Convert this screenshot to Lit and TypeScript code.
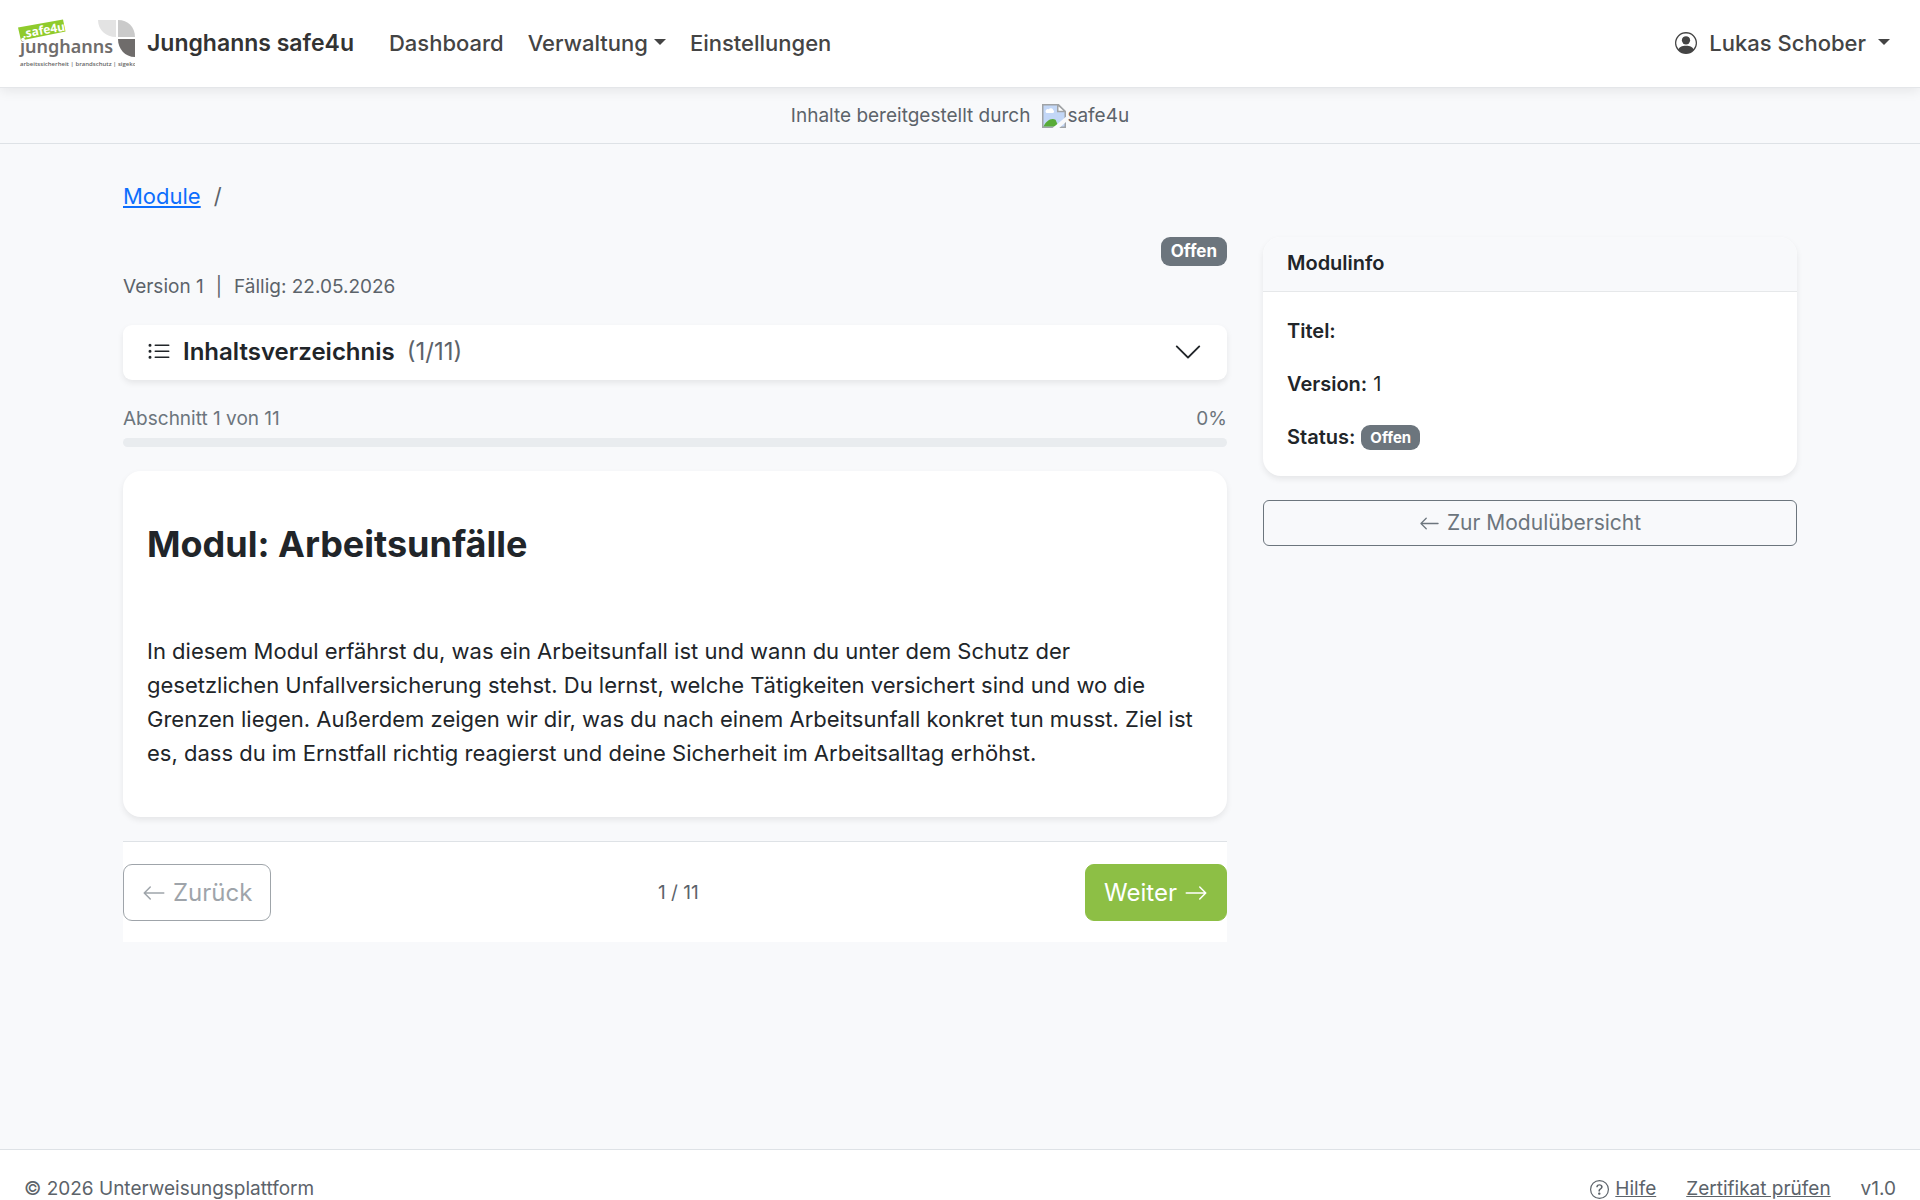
import { LitElement, html, css, svg } from "lit";
import { customElement, property, state } from "lit/decorators.js";

const ICON_PATHS = {
  list: svg`<path fill-rule="evenodd" d="M5 11.5a.5.5 0 0 1 .5-.5h9a.5.5 0 0 1 0 1h-9a.5.5 0 0 1-.5-.5m0-4a.5.5 0 0 1 .5-.5h9a.5.5 0 0 1 0 1h-9a.5.5 0 0 1-.5-.5m0-4a.5.5 0 0 1 .5-.5h9a.5.5 0 0 1 0 1h-9a.5.5 0 0 1-.5-.5m-3 1a1 1 0 1 0 0-2 1 1 0 0 0 0 2m0 4a1 1 0 1 0 0-2 1 1 0 0 0 0 2m0 4a1 1 0 1 0 0-2 1 1 0 0 0 0 2"/>`,
  person: svg`<path d="M11 6a3 3 0 1 1-6 0 3 3 0 0 1 6 0"/><path fill-rule="evenodd" d="M0 8a8 8 0 1 1 16 0A8 8 0 0 1 0 8m8-7a7 7 0 0 0-5.468 11.37C3.242 11.226 4.805 10 8 10s4.757 1.225 5.468 2.37A7 7 0 0 0 8 1"/>`,
  left: svg`<path fill-rule="evenodd" d="M15 8a.5.5 0 0 0-.5-.5H2.707l3.147-3.146a.5.5 0 1 0-.708-.708l-4 4a.5.5 0 0 0 0 .708l4 4a.5.5 0 0 0 .708-.708L2.707 8.5H14.5A.5.5 0 0 0 15 8"/>`,
  right: svg`<path fill-rule="evenodd" d="M1 8a.5.5 0 0 1 .5-.5h11.793l-3.147-3.146a.5.5 0 0 1 .708-.708l4 4a.5.5 0 0 1 0 .708l-4 4a.5.5 0 0 1-.708-.708L13.293 8.5H1.5A.5.5 0 0 1 1 8"/>`,
  chevron: svg`<path fill-rule="evenodd" d="M1.646 4.646a.5.5 0 0 1 .708 0L8 10.293l5.646-5.647a.5.5 0 0 1 .708.708l-6 6a.5.5 0 0 1-.708 0l-6-6a.5.5 0 0 1 0-.708"/>`,
  help: svg`<path d="M8 15A7 7 0 1 1 8 1a7 7 0 0 1 0 14m0 1A8 8 0 1 0 8 0a8 8 0 0 0 0 16"/><path d="M5.255 5.786a.237.237 0 0 0 .241.247h.825c.138 0 .248-.113.266-.25.09-.656.54-1.134 1.342-1.134.686 0 1.314.343 1.314 1.168 0 .635-.374.927-.965 1.371-.673.489-1.206 1.06-1.168 1.987l.003.217a.25.25 0 0 0 .25.246h.811a.25.25 0 0 0 .25-.25v-.105c0-.718.273-.927 1.01-1.486.609-.463 1.244-.977 1.244-2.056 0-1.511-1.276-2.241-2.673-2.241-1.267 0-2.655.59-2.75 2.286m1.557 5.763c0 .533.425.927 1.01.927.609 0 1.028-.394 1.028-.927 0-.552-.42-.94-1.029-.94-.584 0-1.009.388-1.009.94"/>`,
};

@customElement("ui-icon")
class UiIcon extends LitElement {
  static styles = css`
    :host { display: inline-flex; flex: none; width: 22px; height: 22px; }
    svg { display: block; width: 100%; height: 100%; fill: currentColor; }
  `;
  @property() name: keyof typeof ICON_PATHS = "list";
  render() {
    return html`<svg viewBox="0 0 16 16" aria-hidden="true">${ICON_PATHS[this.name]}</svg>`;
  }
}

@customElement("brand-logo")
class BrandLogo extends LitElement {
  static styles = css`
    :host { display: block; flex: none; }
    svg { display: block; }
    .tag { font: 700 12px "Open Sans", sans-serif; fill: #fff; }
    .word { font: 600 18px "Noto Sans", sans-serif; fill: #6f6c6b; }
    .sub { font: 600 6px "Open Sans", sans-serif; fill: #666; }
  `;
  render() {
    return html`
      <svg width="117" height="50" viewBox="0 0 117 50" role="img" aria-label="safe4u Junghanns">
        <text class="word" x="2" y="35">junghanns</text>
        <path d="M0 9.500 45 1.500 47.500 13.500 3 22.500Z" fill="#8fcb2c" />
        <text class="tag" transform="translate(5 20) rotate(-10)">.safe4u</text>
        <circle cx="5" cy="21.500" r="1.800" fill="#fff" />
        <path d="M80 2h18v17C88 19 80 12 80 2Z" fill="#e3e3e3" />
        <path d="M100 2c10 0 17 7 17 17h-17Z" fill="#cacaca" />
        <path d="M100 21h17v18c-10 0-17-8-17-18Z" fill="#6f6c6b" />
        <text class="sub" x="2" y="48">arbeitssicherheit | brandschutz | sigeko</text>
      </svg>
    `;
  }
}

@customElement("app-root")
class AppRoot extends LitElement {
  static styles = css`
    * { box-sizing: border-box; }
    :host {
      display: block;
      font: 400 22px/34px Inter, "Liberation Sans", sans-serif;
      color: #212529;
    }
    .page { display: flex; flex-direction: column; min-height: 100vh; background: #f8f9fb; }
    h1, p { margin: 0; }
    button { font: inherit; cursor: pointer; }
    strong { font-weight: 600; }

    .topbar {
      display: flex; align-items: center; gap: 35px;
      height: 88px; padding: 0 30px 2px 18px;
      background: #fff; border-bottom: 1px solid #e4e6e9;
      box-shadow: 0 3px 12px rgba(0, 0, 0, 0.08);
      color: #444; font-weight: 500;
      position: relative;
    }
    .topbar a { color: inherit; text-decoration: none; }
    .brand { display: flex; align-items: center; gap: 12px; font-size: 23px; font-weight: 600; }
    .topbar .brand { color: #333; }
    .nav { display: flex; align-items: center; gap: 24px; flex: 1; }
    .menu {
      display: flex; align-items: center; gap: 6px; padding: 0;
      border: 0; background: none; color: inherit;
    }
    .menu::after {
      content: ""; border: 6px solid transparent; border-top-color: currentColor; border-bottom: 0;
      margin-bottom: 2px;
    }
    .user { gap: 12px; }

    .provider {
      display: flex; align-items: center; justify-content: center; gap: 12px;
      height: 56px; border-bottom: 1px solid #dee2e6;
      font-size: 19px; color: #5c636a;
    }
    .missing { display: flex; align-items: center; gap: 1px; }

    .content {
      flex: 1; width: 100%; max-width: 1710px; margin: 0 auto;
      padding: 35px 18px 48px;
    }
    .crumbs { display: flex; gap: 13px; margin-bottom: 24px; color: #5c636a; }
    .crumbs a { color: #0d6efd; }
    .columns { display: grid; grid-template-columns: minmax(0, 1104fr) minmax(0, 534fr); gap: 36px; align-items: start; }
    .small { font-size: 19px; line-height: 30px; }

    .badge {
      display: inline-block; padding: 6px 10px; border-radius: 9px;
      background: #6c757d; color: #fff;
      font-size: 17px; line-height: 17px; font-weight: 700;
    }
    .badge.compact { padding: 5px 9px; font-size: 15px; line-height: 15px; }
    .status { display: flex; justify-content: flex-end; margin-bottom: 6px; }
    .meta { display: flex; gap: 12px; color: #5c636a; margin-bottom: 23px; }

    .toc {
      display: flex; align-items: center; gap: 12px; width: 100%;
      height: 55px; padding: 0 24px 2px; border: 0; border-radius: 9px;
      background: #fff; color: #212529;
      font-size: 24px; font-weight: 600; text-align: left;
      box-shadow: 0 3px 6px rgba(0, 0, 0, 0.08);
    }
    .toc ui-icon { width: 24px; height: 24px; }
    .toc .toggle { width: 30px; height: 30px; }
    .toc .count { font-weight: 400; color: #5c636a; flex: 1; }

    .step { display: flex; justify-content: space-between; margin: 24px 0 4px; color: #6c757d; }
    .track { height: 9px; border-radius: 6px; background: #e9ecef; overflow: hidden; }
    .fill { height: 100%; background: #8dbf45; }

    .card {
      background: #fff; border-radius: 18px; overflow: hidden;
      box-shadow: 0 3px 6px rgba(0, 0, 0, 0.08);
    }
    .lesson { margin: 24px 0; padding: 49px 24px 47px; }
    .lesson h1 { font-size: 36px; line-height: 48px; font-weight: 700; margin-bottom: 66px; }

    .pager {
      display: flex; align-items: center; justify-content: space-between;
      padding: 22px 0 21px; background: #fff; border-top: 1px solid #dee2e6;
    }
    .pager .small { color: #5c636a; }
    .btn {
      display: flex; align-items: center; justify-content: center; gap: 7px;
      height: 57px; padding: 0 18px; border: 1px solid #6c757d; border-radius: 9px;
      background: transparent; color: #6c757d; font-size: 24px; text-decoration: none;
    }
    .btn ui-icon { width: 24px; height: 24px; }
    .btn:disabled { opacity: 0.65; cursor: default; }
    .btn.primary { background: #8dbf45; border-color: #8dbf45; color: #fff; }
    .btn.block { height: 46px; border-radius: 6px; font-size: 21px; }
    .btn.block ui-icon { width: 21px; height: 21px; }

    .side { display: flex; flex-direction: column; gap: 24px; }
    .info { font-size: 20px; line-height: 30px; }
    .card-head {
      padding: 11px 24px 13px; background: #f8f9fb; border-bottom: 1px solid #e6e8ea;
      font-weight: 600;
    }
    .card-body { display: flex; flex-direction: column; gap: 23px; padding: 24px; }
    .facts { display: flex; align-items: center; gap: 6px; }

    .footer {
      display: flex; align-items: center; justify-content: space-between;
      padding: 28px 24px 0; line-height: 22px; font-size: 19px;
      background: #fff; border-top: 1px solid #dee2e6; color: #5c636a;
    }
    .links { display: flex; align-items: center; gap: 30px; }
    .links a { color: inherit; }
    .help { display: flex; align-items: center; gap: 6px; }
    .help ui-icon { width: 19px; height: 19px; }
  `;

  @state() private step = 1;
  private readonly total = 11;

  private go(delta: number) {
    this.step = Math.min(this.total, Math.max(1, this.step + delta));
  }

  render() {
    const percent = Math.round(((this.step - 1) / this.total) * 100);
    return html`
      <div class="page">
        <header class="topbar">
          <a class="brand" href="#"><brand-logo></brand-logo>Junghanns safe4u</a>
          <nav class="nav">
            <a href="#dashboard">Dashboard</a>
            <button class="menu" type="button">Verwaltung</button>
            <a href="#einstellungen">Einstellungen</a>
          </nav>
          <button class="menu user" type="button"><ui-icon name="person"></ui-icon>Lukas Schober</button>
        </header>

        <div class="provider">
          <span>Inhalte bereitgestellt durch</span>
          <span class="missing">
            <svg width="24" height="24" viewBox="0 0 16 16" aria-hidden="true">
              <path d="M.5.500H11L15.500 5v10.500H.5Z" fill="#c3d7f7" stroke="#a0a3a6" />
              <path d="M2.500 5.500a1.500 1.500 0 0 1 2-2 1.700 1.700 0 0 1 3 .5 1.200 1.200 0 0 1 0 2H3Z" fill="#fff" />
              <path d="M1 15c1.500-3.500 5-6 8-4.500l2 4.500Z" fill="#58ab38" />
              <path d="M10.500.500V5h5Z" fill="#fff" stroke="#a0a3a6" />
              <path d="M16 8.500 7 16h4.500l4.500-4Z" fill="#f8f9fb" />
            </svg>
            <span>safe4u</span>
          </span>
        </div>

        <main class="content">
          <nav class="crumbs"><a href="#module">Module</a><span>/</span></nav>
          <div class="columns">
            <section>
              <div class="status"><span class="badge">Offen</span></div>
              <div class="meta small"><span>Version 1</span><span>|</span><span>Fällig: 22.05.2026</span></div>
              <button class="toc" type="button">
                <ui-icon name="list"></ui-icon>
                <span>Inhaltsverzeichnis</span>
                <span class="count">(${this.step}/${this.total})</span>
                <ui-icon class="toggle" name="chevron"></ui-icon>
              </button>
              <div class="step small">
                <span>Abschnitt ${this.step} von ${this.total}</span><span>${percent}%</span>
              </div>
              <div class="track"><div class="fill" style="width:${percent}%"></div></div>
              <article class="card lesson">
                <h1>Modul: Arbeitsunfälle</h1>
                <p>
                  In diesem Modul erfährst du, was ein Arbeitsunfall ist und wann du unter dem Schutz der
                  gesetzlichen Unfallversicherung stehst. Du lernst, welche Tätigkeiten versichert sind und
                  wo die Grenzen liegen. Außerdem zeigen wir dir, was du nach einem Arbeitsunfall konkret
                  tun musst. Ziel ist es, dass du im Ernstfall richtig reagierst und deine Sicherheit im
                  Arbeitsalltag erhöhst.
                </p>
              </article>
              <div class="pager">
                <button class="btn" type="button" ?disabled=${this.step === 1} @click=${() => this.go(-1)}>
                  <ui-icon name="left"></ui-icon>Zurück
                </button>
                <span class="small">${this.step} / ${this.total}</span>
                <button class="btn primary" type="button" @click=${() => this.go(1)}>
                  Weiter<ui-icon name="right"></ui-icon>
                </button>
              </div>
            </section>

            <aside class="side">
              <div class="card info">
                <div class="card-head">Modulinfo</div>
                <div class="card-body">
                  <div class="facts"><strong>Titel:</strong></div>
                  <div class="facts"><strong>Version:</strong><span>1</span></div>
                  <div class="facts"><strong>Status:</strong><span class="badge compact">Offen</span></div>
                </div>
              </div>
              <a class="btn block" href="#module"><ui-icon name="left"></ui-icon>Zur Modulübersicht</a>
            </aside>
          </div>
        </main>

        <footer class="footer">
          <span>© 2026 Unterweisungsplattform</span>
          <div class="links">
            <span class="help"><ui-icon name="help"></ui-icon><a href="#hilfe">Hilfe</a></span>
            <a href="#zertifikat">Zertifikat prüfen</a>
            <span>v1.0</span>
          </div>
        </footer>
      </div>
    `;
  }
}
